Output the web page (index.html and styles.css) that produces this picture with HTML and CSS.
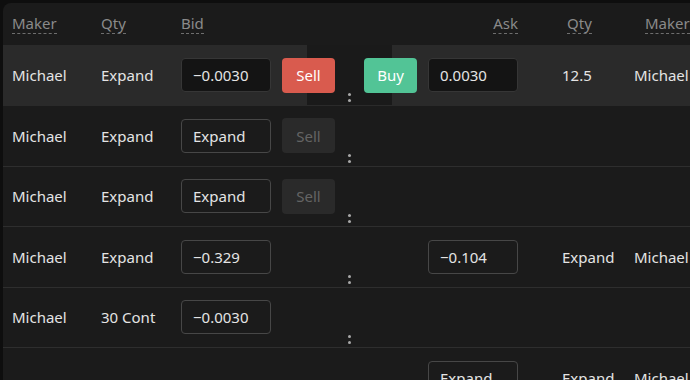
FILE: index.html
```html
<!DOCTYPE html>
<html>
<head>
<meta charset="utf-8">
<link rel="stylesheet" href="styles.css">
</head>
<body>
<div class="panel">
  <div class="head">
    <span class="h h-maker"><span class="dash">Maker</span></span>
    <span class="h h-qty"><span class="dash">Qty</span></span>
    <span class="h h-bid"><span class="dash">Bid</span></span>
    <span class="h h-ask"><span class="dash">Ask</span></span>
    <span class="h h-qty2"><span class="dash">Qty</span></span>
    <span class="h h-maker2"><span class="dash">Maker</span></span>
  </div>

  <div class="row active">
    <span class="c maker">Michael</span>
    <span class="c qty">Expand</span>
    <span class="inp dark">−0.0030</span>
    <span class="btn sell">Sell</span>
    <span class="mid"><i></i><i></i></span>
    <span class="btn buy">Buy</span>
    <span class="inp dark">0.0030</span>
    <span class="c qty2">12.5</span>
    <span class="c maker2">Michael</span>
  </div>

  <div class="row">
    <span class="c maker">Michael</span>
    <span class="c qty">Expand</span>
    <span class="inp">Expand</span>
    <span class="btn off">Sell</span>
    <span class="mid"><i></i><i></i></span>
  </div>

  <div class="row">
    <span class="c maker">Michael</span>
    <span class="c qty">Expand</span>
    <span class="inp">Expand</span>
    <span class="btn off">Sell</span>
    <span class="mid"><i></i><i></i></span>
  </div>

  <div class="row">
    <span class="c maker">Michael</span>
    <span class="c qty">Expand</span>
    <span class="inp">−0.329</span>
    <span class="btn ghost"></span>
    <span class="mid"><i></i><i></i></span>
    <span class="btn ghost"></span>
    <span class="inp">−0.104</span>
    <span class="c qty2">Expand</span>
    <span class="c maker2">Michael</span>
  </div>

  <div class="row">
    <span class="c maker">Michael</span>
    <span class="c qty">30 Cont</span>
    <span class="inp">−0.0030</span>
    <span class="btn ghost"></span>
    <span class="mid"><i></i><i></i></span>
  </div>

  <div class="row">
    <span class="c maker"></span>
    <span class="c qty"></span>
    <span class="inp ghost"></span>
    <span class="btn ghost"></span>
    <span class="mid"></span>
    <span class="btn ghost"></span>
    <span class="inp">Expand</span>
    <span class="c qty2">Expand</span>
    <span class="c maker2">Michael</span>
  </div>
</div>
</body>
</html>
```

FILE: styles.css
```css
html, body {
  margin: 0;
  padding: 0;
  background: #0e0e0e;
  height: 100%;
  overflow: hidden;
}
body {
  font-family: "Noto Sans", "Open Sans", sans-serif;
  font-size: 15px;
  color: #e4e4e4;
}
.panel {
  margin: 3px 0 0 3px;
  background: #1b1b1b;
  border-top-left-radius: 8px;
  height: 377px;
  overflow: hidden;
}
.head {
  height: 42px;
  display: flex;
  align-items: center;
  padding-left: 9px;
  color: #8a8a8a;
  box-sizing: border-box;
  padding-bottom: 1px;
}
.dash {
  border-bottom: 1px dashed #6e6e6e;
  padding-bottom: 1px;
  line-height: 18px;
  display: inline-block;
}
.h-maker { width: 89px; }
.h-qty { width: 80px; }
.h-bid { width: 249px; }
.h-ask { width: 88px; text-align: right; }
.h-qty2 { width: 49px; margin-left: 49px; }
.h-maker2 { margin-left: 29px; white-space: nowrap; }

.row {
  height: 60.5px;
  box-sizing: border-box;
  border-bottom: 1px solid #2e2e2e;
  display: flex;
  align-items: center;
  padding-left: 9px;
  white-space: nowrap;
}
.row.active {
  height: 61px;
  background: linear-gradient(to right, #2a2a2a 304px, #1a1a1a 304px, #1a1a1a 389px, #2a2a2a 389px);
  border-bottom-color: #2a2a2a;
}
.c { display: block; }
.maker { width: 89px; flex: none; }
.qty { width: 80px; flex: none; }
.qty2 { width: 72px; margin-left: 44px; flex: none; }
.maker2 { flex: none; }

.inp {
  width: 90px;
  height: 34px;
  box-sizing: border-box;
  border: 1px solid #474747;
  border-radius: 4px;
  padding-left: 11px;
  display: flex;
  align-items: center;
  flex: none;
}
.inp.dark {
  background: #141414;
  border-color: #363636;
}
.inp.ghost { border-color: transparent; }

.btn {
  width: 53px;
  height: 35px;
  border-radius: 4px;
  margin-left: 11px;
  display: flex;
  align-items: center;
  justify-content: center;
  flex: none;
  color: #fff;
}
.btn.buy { margin-left: 0; margin-right: 11px; background: #52c496; }
.btn.sell { background: #d95b4e; }
.btn.off { background: #2a2a2a; color: #646464; }
.btn.ghost { background: transparent; }
.mid + .btn.ghost { margin-left: 0; margin-right: 11px; }

.mid {
  width: 29px;
  align-self: flex-end;
  display: flex;
  flex-direction: column;
  align-items: center;
  gap: 3px;
  padding-bottom: 3px;
  flex: none;
}
.mid i {
  display: block;
  width: 3px;
  height: 3px;
  border-radius: 50%;
  background: #a8a8a8;
}
```
